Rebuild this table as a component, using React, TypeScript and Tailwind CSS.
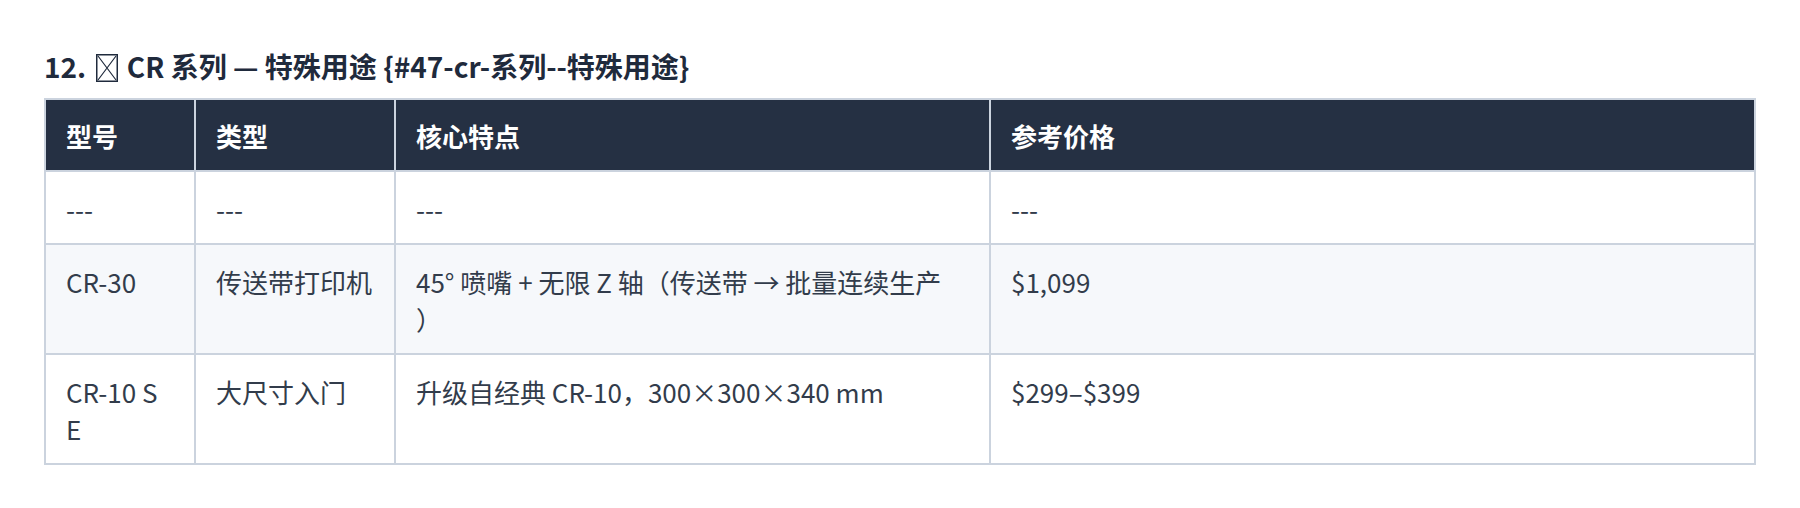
import React from "react";

const font = { fontFamily: '"Noto Sans CJK SC", "Noto Sans", sans-serif' };

function Tofu() {
  return (
    <span className="inline-block align-[-4px] mx-[3px] w-[22px] h-[28px]">
      <svg width="22" height="28" viewBox="0 0 22 28" className="block">
        <rect x="0.75" y="0.75" width="20.5" height="26.5" fill="none" stroke="#1f2a3c" strokeWidth="1.5" />
        <path d="M2 2 L20 26 M20 2 L2 26" stroke="#1f2a3c" strokeWidth="1.2" fill="none" />
      </svg>
    </span>
  );
}

export default function App() {
  const th = "border-2 border-[#cbd3de] px-[20px] pt-[17px] pb-[16px] text-left align-top font-bold text-white text-[26px] leading-[37px]";
  const td = "border-2 border-[#cbd3de] px-[20px] pt-[18px] pb-[16px] text-left align-top text-[26px] leading-[37px] text-[#323c4b]";
  return (
    <div className="w-[1800px] h-[508px] bg-white px-[44px] pt-[48px]" style={font}>
      <h3 className="text-[28px] leading-[36px] font-bold text-[#1f2a3c] m-0">
        12. <Tofu /> CR 系列 — 特殊用途 {"{#47-cr-系列--特殊用途}"}
      </h3>
      <table className="w-full border-collapse mt-[14px] table-fixed">
        <colgroup>
          <col className="w-[150px]" />
          <col className="w-[200px]" />
          <col className="w-[595px]" />
          <col />
        </colgroup>
        <thead>
          <tr className="bg-[#253043]">
            <th className={th}>型号</th>
            <th className={th}>类型</th>
            <th className={th}>核心特点</th>
            <th className={th}>参考价格</th>
          </tr>
        </thead>
        <tbody>
          <tr className="bg-white">
            <td className={td}>---</td>
            <td className={td}>---</td>
            <td className={td}>---</td>
            <td className={td}>---</td>
          </tr>
          <tr className="bg-[#f6f8fb]">
            <td className={td}>CR-30</td>
            <td className={td}>传送带打印机</td>
            <td className={td}>
              45° 喷嘴 + 无限 Z 轴（传送带 → 批量连续生产
              <br />）
            </td>
            <td className={td}>$1,099</td>
          </tr>
          <tr className="bg-white">
            <td className={td}>
              CR-10 S
              <br />E
            </td>
            <td className={td}>大尺寸入门</td>
            <td className={td}>升级自经典 CR-10，300×300×340 mm</td>
            <td className={td}>$299–$399</td>
          </tr>
        </tbody>
      </table>
    </div>
  );
}
